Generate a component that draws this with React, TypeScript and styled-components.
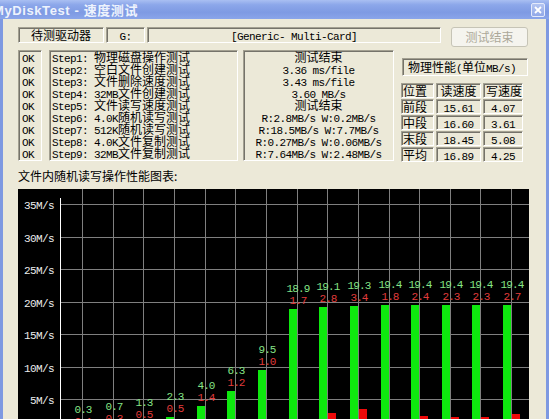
import React from 'react';
import styled, { createGlobalStyle } from 'styled-components';

const GlobalStyle = createGlobalStyle`
  html, body {
    margin: 0;
    padding: 0;
    background: #ece9d8;
  }
  body {
    font-family: "Noto Sans CJK SC", "Noto Sans", sans-serif;
    font-size: 12px;
    color: #000;
  }
`;

const Window = styled.div`
  width: 549px;
  height: 419px;
  overflow: hidden;
  display: flex;
  flex-direction: column;
  background: #7e99e1;
`;

const TitleBar = styled.div`
  flex: none;
  height: 19px;
  display: flex;
  align-items: center;
  justify-content: space-between;
  padding-right: 4px;
  background: linear-gradient(#a9bff2 0%, #8ca7ea 25%, #7e9ae3 65%, #8aa5ea 100%);
`;

const Title = styled.div`
  margin-left: -7px;
  color: #eef3fd;
  font-family: "Liberation Sans", "Noto Sans CJK SC", sans-serif;
  font-weight: bold;
  font-size: 13px;
  letter-spacing: 0.6px;
  white-space: pre;
`;

const CloseButton = styled.div`
  width: 14px;
  height: 14px;
  box-sizing: border-box;
  border: 1px solid #e4eafb;
  border-radius: 2px;
  background: linear-gradient(#b4c5f1, #91a8e8);
  display: flex;
  align-items: center;
  justify-content: center;
`;

const Client = styled.div`
  flex: 1;
  margin: 0 3px;
  padding: 8px 17px 0 15px;
  background: #ece9d8;
  display: flex;
  flex-direction: column;
  min-height: 0;
`;

const Latin = styled.span`
  font-family: "Liberation Mono", monospace;
  font-size: 11px;
  letter-spacing: -0.6px;
  white-space: pre;
`;

const Sunken = styled.div<{ $w: number; $h?: number; $align?: string; $pad?: number; $lh?: number }>`
  box-sizing: border-box;
  width: ${p => p.$w}px;
  height: ${p => p.$h ?? 16}px;
  padding: 0 ${p => p.$pad ?? 2}px;
  border-top: 1px solid #a3a091;
  border-left: 1px solid #a3a091;
  border-right: 1px solid #fff;
  border-bottom: 1px solid #fff;
  box-shadow: inset 1px 1px 0 #75736a;
  text-align: ${p => p.$align ?? 'center'};
  line-height: ${p => p.$lh ?? 13}px;
  white-space: nowrap;
  overflow: hidden;
  flex: none;
`;

const TopRow = styled.div`
  display: flex;
  align-items: flex-start;
  gap: 2px;
  height: 20px;
  margin-bottom: 3px;
`;

const DisabledButton = styled.div`
  margin-left: auto;
  margin-right: 1px;
  width: 77px;
  height: 20px;
  box-sizing: border-box;
  border: 1px solid #c6c4b6;
  border-radius: 3px;
  background: #f5f4ee;
  color: #aca899;
  text-align: center;
  line-height: 18px;
`;

const MiddleRow = styled.div`
  display: flex;
  align-items: flex-start;
`;

const ListBox = styled(Sunken)<{ $gap?: number }>`
  margin-left: ${p => p.$gap ?? 0}px;
  line-height: 12px;
`;

const Line = styled.div`
  height: 12px;
`;

const RightPanel = styled.div`
  width: 126px;
  margin-left: 8px;
  padding-top: 8px;
  display: flex;
  flex-direction: column;
`;

const PerfTable = styled.div`
  margin-top: 7px;
  margin-left: -1px;
  display: grid;
  grid-template-columns: 33px 45px 40px;
  column-gap: 2px;
  row-gap: 1px;
`;

const ChartLabel = styled.div`
  margin-top: 7px;
  line-height: 14px;
  height: 14px;
`;

const Chart = styled.div`
  margin-top: 6px;
  width: 511px;
  height: 240px;
  background: #000;
  flex: none;
`;

const Mixed: React.FC<{ text: string }> = ({ text }) => (
  <>
    {text
      .split(/([\x20-\x7e]+)/)
      .filter(Boolean)
      .map((part, i) =>
        /^[\x20-\x7e]+$/.test(part) ? <Latin key={i}>{part}</Latin> : <span key={i}>{part}</span>
      )}
  </>
);

const steps = [
  'Step1: 物理磁盘操作测试',
  'Step2: 空白文件创建测试',
  'Step3: 文件删除速度测试',
  'Step4: 32MB文件创建测试',
  'Step5: 文件读写速度测试',
  'Step6: 4.0K随机读写测试',
  'Step7: 512K随机读写测试',
  'Step8: 4.0K文件复制测试',
  'Step9: 32MB文件复制测试',
];

const results = [
  '测试结束',
  '3.36 ms/file',
  '3.43 ms/file',
  '3.60 MB/s',
  '测试结束',
  'R:2.8MB/s W:0.2MB/s',
  'R:18.5MB/s W:7.7MB/s',
  'R:0.27MB/s W:0.06MB/s',
  'R:7.64MB/s W:2.48MB/s',
];

const perf = [
  ['位置', '读速度', '写速度'],
  ['前段', '15.61', '4.07'],
  ['中段', '16.60', '3.61'],
  ['末段', '18.45', '5.08'],
  ['平均', '16.89', '4.25'],
];

const widths = [33, 45, 40];

// read / write speed per test block, MB/s
const bars: [number, number][] = [
  [0.3, 0.1], [0.7, 0.3], [1.3, 0.5], [2.3, 0.5], [4.0, 1.4],
  [6.3, 1.2], [9.5, 1.0], [18.9, 1.7], [19.1, 2.8], [19.3, 3.4],
  [19.4, 1.8], [19.4, 2.4], [19.4, 2.3], [19.4, 2.3], [19.4, 2.7],
];

const ZERO = 242.5;
const PX_PER_MB = 6.5;
const AXIS_X = 42;
const CHART_W = 511;
const CHART_H = 240;

const SpeedChart: React.FC = () => {
  const ticks = [35, 30, 25, 20, 15, 10, 5];
  const cols = bars.map((_, i) => Math.round(64 + 30.65 * i));
  return (
    <svg width={CHART_W} height={CHART_H} shapeRendering="crispEdges">
      {cols.map(x => (
        <line key={x} x1={x + 0.5} x2={x + 0.5} y1={0} y2={CHART_H} stroke="#7f7f7f" />
      ))}
      {ticks.map(t => {
        const y = Math.round(ZERO - t * PX_PER_MB) + 0.5;
        return (
          <g key={t}>
            <line x1={AXIS_X} x2={CHART_W} y1={y} y2={y} stroke="#7f7f7f" />
            <text
              x={36}
              y={y + 4}
              textAnchor="end"
              fill="#ececec"
              fontFamily="Liberation Mono, monospace"
              fontSize={11}
              letterSpacing={-0.6}
              shapeRendering="auto"
            >
              {t}M/s
            </text>
          </g>
        );
      })}
      <line x1={AXIS_X + 0.5} x2={AXIS_X + 0.5} y1={9} y2={CHART_H} stroke="#fff" />
      {bars.map(([r, w], i) => {
        const g = cols[i];
        const rTop = ZERO - r * PX_PER_MB;
        const wTop = ZERO - w * PX_PER_MB;
        return (
          <g key={i}>
            <rect x={g - 8} y={rTop} width={8} height={r * PX_PER_MB} fill="#0ee80e" />
            <rect x={g + 1} y={wTop} width={8} height={w * PX_PER_MB} fill="#ee0a0a" />
            <text
              x={g + 1}
              y={rTop - 17}
              textAnchor="middle"
              fill="#86e486"
              fontFamily="Liberation Mono, monospace"
              fontSize={11}
              letterSpacing={-0.9}
              shapeRendering="auto"
            >
              {r.toFixed(1)}
            </text>
            <text
              x={g + 1}
              y={rTop - 5}
              textAnchor="middle"
              fill="#e23c3c"
              fontFamily="Liberation Mono, monospace"
              fontSize={11}
              letterSpacing={-0.9}
              shapeRendering="auto"
            >
              {w.toFixed(1)}
            </text>
          </g>
        );
      })}
    </svg>
  );
};

const App: React.FC = () => (
  <>
    <GlobalStyle />
    <Window>
      <TitleBar>
        <Title>MyDiskTest - 速度测试</Title>
        <CloseButton>
          <svg width="8" height="8" viewBox="0 0 8 8">
            <path d="M1 1 L7 7 M7 1 L1 7" stroke="#fff" strokeWidth="1.8" />
          </svg>
        </CloseButton>
      </TitleBar>

      <Client>
        <TopRow>
          <Sunken $w={86}>待测驱动器</Sunken>
          <Sunken $w={39}>
            <Mixed text="G:" />
          </Sunken>
          <Sunken $w={294}>
            <Mixed text="[Generic- Multi-Card]" />
          </Sunken>
          <DisabledButton>测试结束</DisabledButton>
        </TopRow>

        <MiddleRow>
          <ListBox $w={24} $h={111} $align="left" $pad={3}>
            {steps.map(s => (
              <Line key={s}>
                <Latin>OK</Latin>
              </Line>
            ))}
          </ListBox>
          <ListBox $w={189} $h={111} $align="left" $pad={2} $gap={7}>
            {steps.map(s => (
              <Line key={s}>
                <Mixed text={s} />
              </Line>
            ))}
          </ListBox>
          <ListBox $w={151} $h={111} $align="center" $gap={5}>
            {results.map((s, i) => (
              <Line key={i}>
                <Mixed text={s} />
              </Line>
            ))}
          </ListBox>
          <RightPanel>
            <Sunken $w={126} $h={18} $align="left" $pad={5} $lh={15}>
              <Mixed text="物理性能(单位MB/s)" />
            </Sunken>
            <PerfTable>
              {perf.map(row =>
                row.map((cell, c) => (
                  <Sunken
                    key={row[0] + c}
                    $w={widths[c]}
                    $h={15}
                    $lh={13}
                    $align={c === 0 ? 'left' : 'center'}
                    $pad={c === 0 ? 1 : 2}
                  >
                    <Mixed text={cell} />
                  </Sunken>
                ))
              )}
            </PerfTable>
          </RightPanel>
        </MiddleRow>

        <ChartLabel>文件内随机读写操作性能图表:</ChartLabel>
        <Chart>
          <SpeedChart />
        </Chart>
      </Client>
    </Window>
  </>
);

export default App;
